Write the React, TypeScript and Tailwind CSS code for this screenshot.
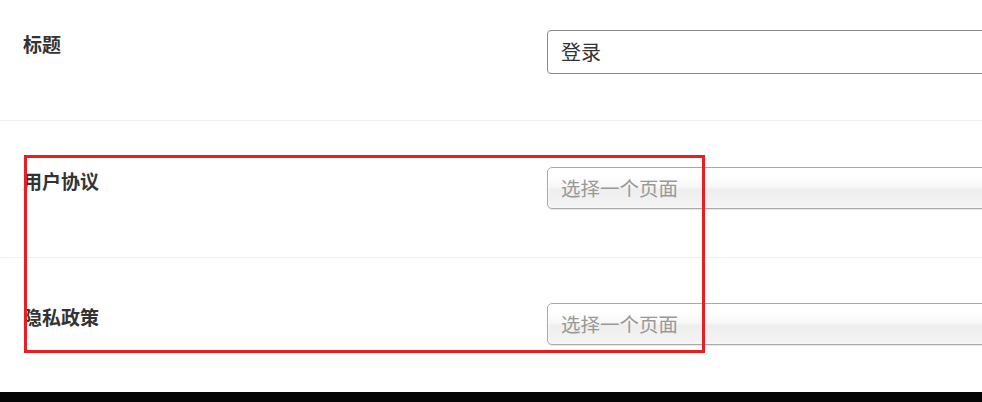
import React from "react";

const font = {
  fontFamily: '"Noto Sans CJK SC", "Microsoft YaHei", "Noto Sans", sans-serif',
};

function Label({ text }: { text: string }) {
  return (
    <div className="w-[547px] shrink-0 pl-[23px] pt-[3px]">
      <span className="text-[19px] font-bold leading-[20px] text-[#333]">{text}</span>
    </div>
  );
}

function ChosenSelect({ placeholder }: { placeholder: string }) {
  return (
    <div className="flex h-[42px] w-[500px] shrink-0 items-center rounded-[5px] border border-[#aaa] bg-[linear-gradient(#fff_20%,#f6f6f6_50%,#eee_52%,#f4f4f4_100%)] pl-[13px] shadow-[inset_0_0_3px_#fff,0_1px_1px_rgba(0,0,0,0.1)]">
      <span className="text-[19.5px] leading-none text-[#999]">{placeholder}</span>
    </div>
  );
}

export default function App() {
  return (
    <div className="relative h-[402px] w-[982px] overflow-hidden bg-white" style={font}>
      {/* 标题 */}
      <div className="flex h-[121px] border-b border-[#eee] pt-[30px]">
        <Label text="标题" />
        <div className="flex h-[44px] w-[500px] shrink-0 items-center rounded-[4px] border border-[#888] bg-white pl-[13px]">
          <span className="text-[20px] leading-none text-[#333]">登录</span>
        </div>
      </div>

      {/* 用户协议 */}
      <div className="flex h-[137px] border-b border-[#eee] pt-[46px]">
        <Label text="用户协议" />
        <ChosenSelect placeholder="选择一个页面" />
      </div>

      {/* 隐私政策 */}
      <div className="flex h-[134px] pt-[45px]">
        <Label text="隐私政策" />
        <ChosenSelect placeholder="选择一个页面" />
      </div>

      <div className="h-[10px] bg-[#050505]" />

      {/* annotation box */}
      <div className="pointer-events-none absolute left-[24px] top-[155px] h-[198px] w-[681px] border-[3px] border-[#ec1c24]" />
    </div>
  );
}
